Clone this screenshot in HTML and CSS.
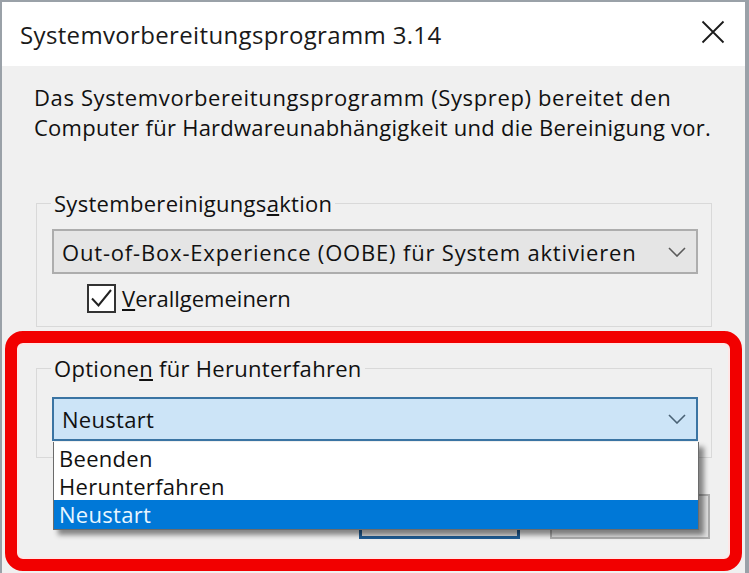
FILE: index.html
```html
<!DOCTYPE html>
<html lang="de">
<head>
<meta charset="utf-8">
<title>Systemvorbereitungsprogramm 3.14</title>
<link rel="stylesheet" href="styles.css">
</head>
<body>
<div class="window">
  <div class="titlebar">
    <span class="title">Systemvorbereitungsprogramm 3.14</span>
    <span class="close">
      <svg width="24" height="24" viewBox="0 0 24 24"><path d="M1.5 1.5 L22.5 22.5 M22.5 1.5 L1.5 22.5" stroke="#1a1a1a" stroke-width="1.8" fill="none"/></svg>
    </span>
  </div>
  <div class="content">
    <p class="desc"><span class="desc-l1">Das Systemvorbereitungsprogramm (Sysprep) bereitet den</span><br><span class="desc-l2">Computer für Hardwareunabhängigkeit und die Bereinigung vor.</span></p>

    <fieldset class="group group-action">
      <legend>Systembereinigungs<u>a</u>ktion</legend>
      <div class="combo">
        <span class="combo-text combo-text-wide">Out-of-Box-Experience (OOBE) für System aktivieren</span>
        <svg class="chev" width="18" height="10" viewBox="0 0 18 10"><path d="M1 1 L9 9 L17 1" stroke="#5a5a5a" stroke-width="1.6" fill="none"/></svg>
      </div>
      <label class="check">
        <span class="box">
          <svg width="25" height="25" viewBox="0 0 25 25"><path d="M3 12.5 L9.5 19.5 L22 4" stroke="#222" stroke-width="2" fill="none"/></svg>
        </span>
        <span class="check-label"><u>V</u>erallgemeinern</span>
      </label>
    </fieldset>

    <fieldset class="group group-shutdown">
      <legend>Optione<u>n</u> für Herunterfahren</legend>
      <div class="combo combo-focus">
        <span class="combo-text">Neustart</span>
        <svg class="chev" width="18" height="10" viewBox="0 0 18 10"><path d="M1 1 L9 9 L17 1" stroke="#4a6275" stroke-width="1.6" fill="none"/></svg>
      </div>
    </fieldset>

    <div class="buttons">
      <button class="btn btn-default">OK</button>
      <button class="btn">Abbrechen</button>
    </div>
  </div>

  <ul class="dropdown">
    <li class="item">Beenden</li>
    <li class="item">Herunterfahren</li>
    <li class="item selected">Neustart</li>
  </ul>

  <div class="highlight-frame"></div>
</div>
</body>
</html>
```

FILE: styles.css
```css
html, body {
  margin: 0;
  padding: 0;
}
body {
  background: #9aa1a8;
  width: 749px;
  height: 573px;
  overflow: hidden;
  font-family: "Open Sans", "Noto Sans", sans-serif;
  color: #111;
}
.window {
  position: relative;
  margin: 2px 0 0 2px;
  width: 743px;
  height: 571px;
  background: #f0f0f0;
  display: flex;
  flex-direction: column;
}
.titlebar {
  height: 64px;
  background: #ffffff;
  display: flex;
  align-items: center;
  justify-content: space-between;
  padding: 0 20px 0 18px;
  flex: none;
}
.title {
  font-size: 24px;
  letter-spacing: 0.35px;
  color: #1a1a1a;
  white-space: nowrap;
}
.close {
  display: flex;
  margin-top: -4px;
}
.content {
  flex: 1;
  padding: 0 0 0 34px;
  display: flex;
  flex-direction: column;
}
.desc {
  margin: 16px 0 0 -2px;
  font-size: 22px;
  line-height: 30px;
  white-space: nowrap;
  color: #111;
}
.desc-l1 {
  letter-spacing: 0.63px;
}
.desc-l2 {
  letter-spacing: 0.25px;
}
.group {
  margin: 0;
  padding: 0;
  width: 674px;
  border: 1px solid #d9d9d9;
  font-size: 22px;
  letter-spacing: 0.3px;
}
.group legend {
  margin-left: 14px;
  padding: 0 3px;
  line-height: 30px;
  color: #111;
}
.group-action {
  margin-top: 46px;
  padding: 11px 0 13px 0;
}
.group-shutdown {
  margin-top: 26px;
  padding: 14px 0 16px 0;
}
.combo {
  margin-left: 15px;
  width: 646px;
  height: 45px;
  box-sizing: border-box;
  border: 2px solid #adadad;
  background: #e5e5e5;
  display: flex;
  align-items: center;
  justify-content: space-between;
  padding: 0 10px 0 8px;
}
.combo-focus {
  height: 44px;
  border-color: #3a74a3;
  background: #cce4f7;
}
.combo-text {
  font-size: 22px;
  color: #111;
  white-space: nowrap;
}
.combo-text-wide {
  letter-spacing: 0.82px;
}
.chev {
  flex: none;
}
.check {
  display: flex;
  align-items: center;
  gap: 6px;
  margin: 9px 0 0 50px;
}
.box {
  width: 29px;
  height: 29px;
  box-sizing: border-box;
  border: 2px solid #333;
  background: #fff;
  display: flex;
  align-items: center;
  justify-content: center;
}
.check-label {
  font-size: 22px;
  letter-spacing: 0;
  color: #111;
}
.buttons {
  display: flex;
  justify-content: flex-end;
  gap: 30px;
  margin: 36px 35px 0 0;
}
.btn {
  width: 161px;
  height: 45px;
  box-sizing: border-box;
  border: 2px solid #adadad;
  background: #e1e1e1;
  font-family: "Open Sans", "Noto Sans", sans-serif;
  font-size: 22px;
  color: #111;
  padding: 0;
}
.btn + .btn {
  width: 160px;
}
.btn-default {
  border: 3px solid #1f5d96;
}
.dropdown {
  position: absolute;
  left: 51px;
  top: 440px;
  width: 644px;
  margin: 0;
  padding: 2px 0 0 0;
  list-style: none;
  background: #ffffff;
  border: 1px solid #6b6b6b;
  border-top: none;
  box-shadow: 5px 5px 5px rgba(0, 0, 0, 0.45);
  font-size: 22px;
  letter-spacing: 0.3px;
}
.item {
  height: 28px;
  line-height: 28px;
  padding-left: 5px;
  color: #111;
  white-space: nowrap;
}
.item.selected {
  background: #0078d7;
  color: #e8f6ff;
  height: 29px;
}
.highlight-frame {
  position: absolute;
  left: 3px;
  top: 329px;
  width: 737px;
  height: 240px;
  box-sizing: border-box;
  border: 12px solid #f20000;
  border-radius: 18px;
  box-shadow: inset 0 0 0 2px rgba(255, 230, 230, 0.9);
  pointer-events: none;
}
```
